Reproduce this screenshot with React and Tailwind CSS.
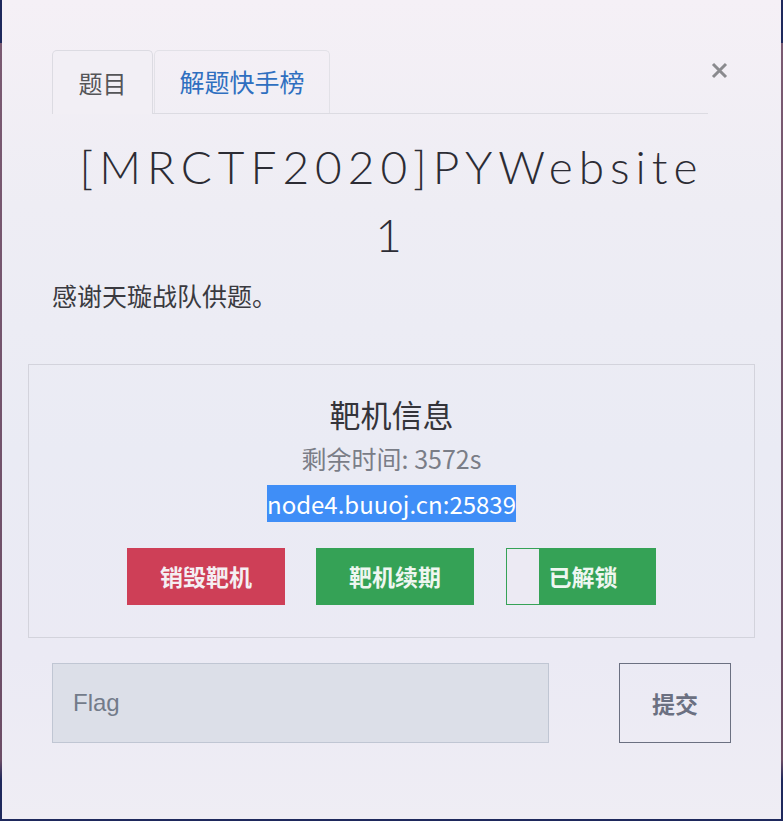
import React from 'react';

const cjk = { fontFamily: '"Noto Sans CJK SC", "Noto Sans", sans-serif' };

function App() {
  return (
    <div className="min-h-[821px] w-[783px] bg-[linear-gradient(to_bottom,#1e285c_0px,#1e285c_43px,#7a5a72_43px,#6c4d66_760px,#1e285c_780px)] pl-[2px] pr-[2px] pb-[2px]" style={cjk}>
      <div className="h-[819px] w-[779px] bg-[linear-gradient(to_bottom,#f5f0f6_0%,#eeedf4_25%,#eaebf4_55%,#ebeaf4_80%,#efedf4_100%)] px-[26px] pt-[50px]">
        {/* tabs */}
        <div className="flex items-start pl-[24px]">
          <div className="flex w-[656px] border-b border-[#dcdbe2]">
            <div className="-mb-px flex h-[64px] w-[101px] items-center justify-center rounded-t-[5px] border border-b-0 border-[#dcdbe2] bg-[#f2eff5] text-[24px] text-[#555558]">
              题目
            </div>
            <div className="ml-px flex h-[63px] w-[176px] items-center justify-center rounded-t-[5px] border border-b-0 border-[#e2e1e7] text-[25px] text-[#2f6fc0]">
              解题快手榜
            </div>
          </div>
          <button className="ml-[3px] mt-[12px] flex h-[17px] w-[17px] items-center justify-center">
            <svg width="17" height="17" viewBox="0 0 17 17">
              <path d="M2 2L15 15M15 2L2 15" stroke="#8a8a8e" strokeWidth="3" />
            </svg>
          </button>
        </div>

        {/* title */}
        <h1 className="mx-auto mt-[19px] w-[630px] text-center text-[46px] font-light leading-[68px] tracking-[6px] text-[#2c2c34]" style={{ fontFamily: 'Lato, sans-serif' }}>
          [MRCTF2020]PYWebsite 1
        </h1>
        <p className="mt-[10px] pl-[24px] text-[25px] leading-[32px] text-[#3a3a40]">感谢天璇战队供题。</p>

        {/* 靶机信息 */}
        <div className="mt-[53px] flex h-[274px] flex-col items-center border border-[#d3d3dc] pt-[29px]">
          <h2 className="text-[31px] leading-[40px] text-[#34343a]">靶机信息</h2>
          <p className="mt-[8px] text-[25px] leading-[32px] text-[#7a7d87]">剩余时间: 3572s</p>
          <span className="mt-[11px] bg-[#3f8ef7] text-[24px] leading-[37px] text-white">node4.buuoj.cn:25839</span>
          <div className="mt-[26px] flex gap-[31px]">
            <button className="h-[57px] w-[158px] bg-[#ce3f57] text-[23px] font-bold text-[#f4eef2]">销毁靶机</button>
            <button className="h-[57px] w-[158px] bg-[#35a256] text-[23px] font-bold text-[#eef6f0]">靶机续期</button>
            <button className="relative ml-px h-[57px] w-[150px] border border-[#35a256] bg-[#35a256] pl-[4px] text-[23px] font-bold text-[#eef6f0]">
              <span className="absolute left-0 top-0 h-full w-[32px] bg-[#eceaf3]"></span>
              已解锁
            </button>
          </div>
        </div>

        {/* flag */}
        <div className="mt-[25px] flex items-center pl-[24px]">
          <input
            placeholder="Flag"
            className="h-[80px] w-[497px] border border-[#c0c6d3] bg-[#dcdfe8] px-[20px] text-[24px] text-[#444] placeholder:text-[#737b8a] outline-none"
            style={{ fontFamily: '"Liberation Sans", "Noto Sans CJK SC", sans-serif' }}
          />
          <button className="ml-[70px] h-[80px] w-[112px] border border-[#6b7081] text-[23px] font-bold text-[#6b7081]">提交</button>
        </div>
      </div>
    </div>
  );
}

export default App;
